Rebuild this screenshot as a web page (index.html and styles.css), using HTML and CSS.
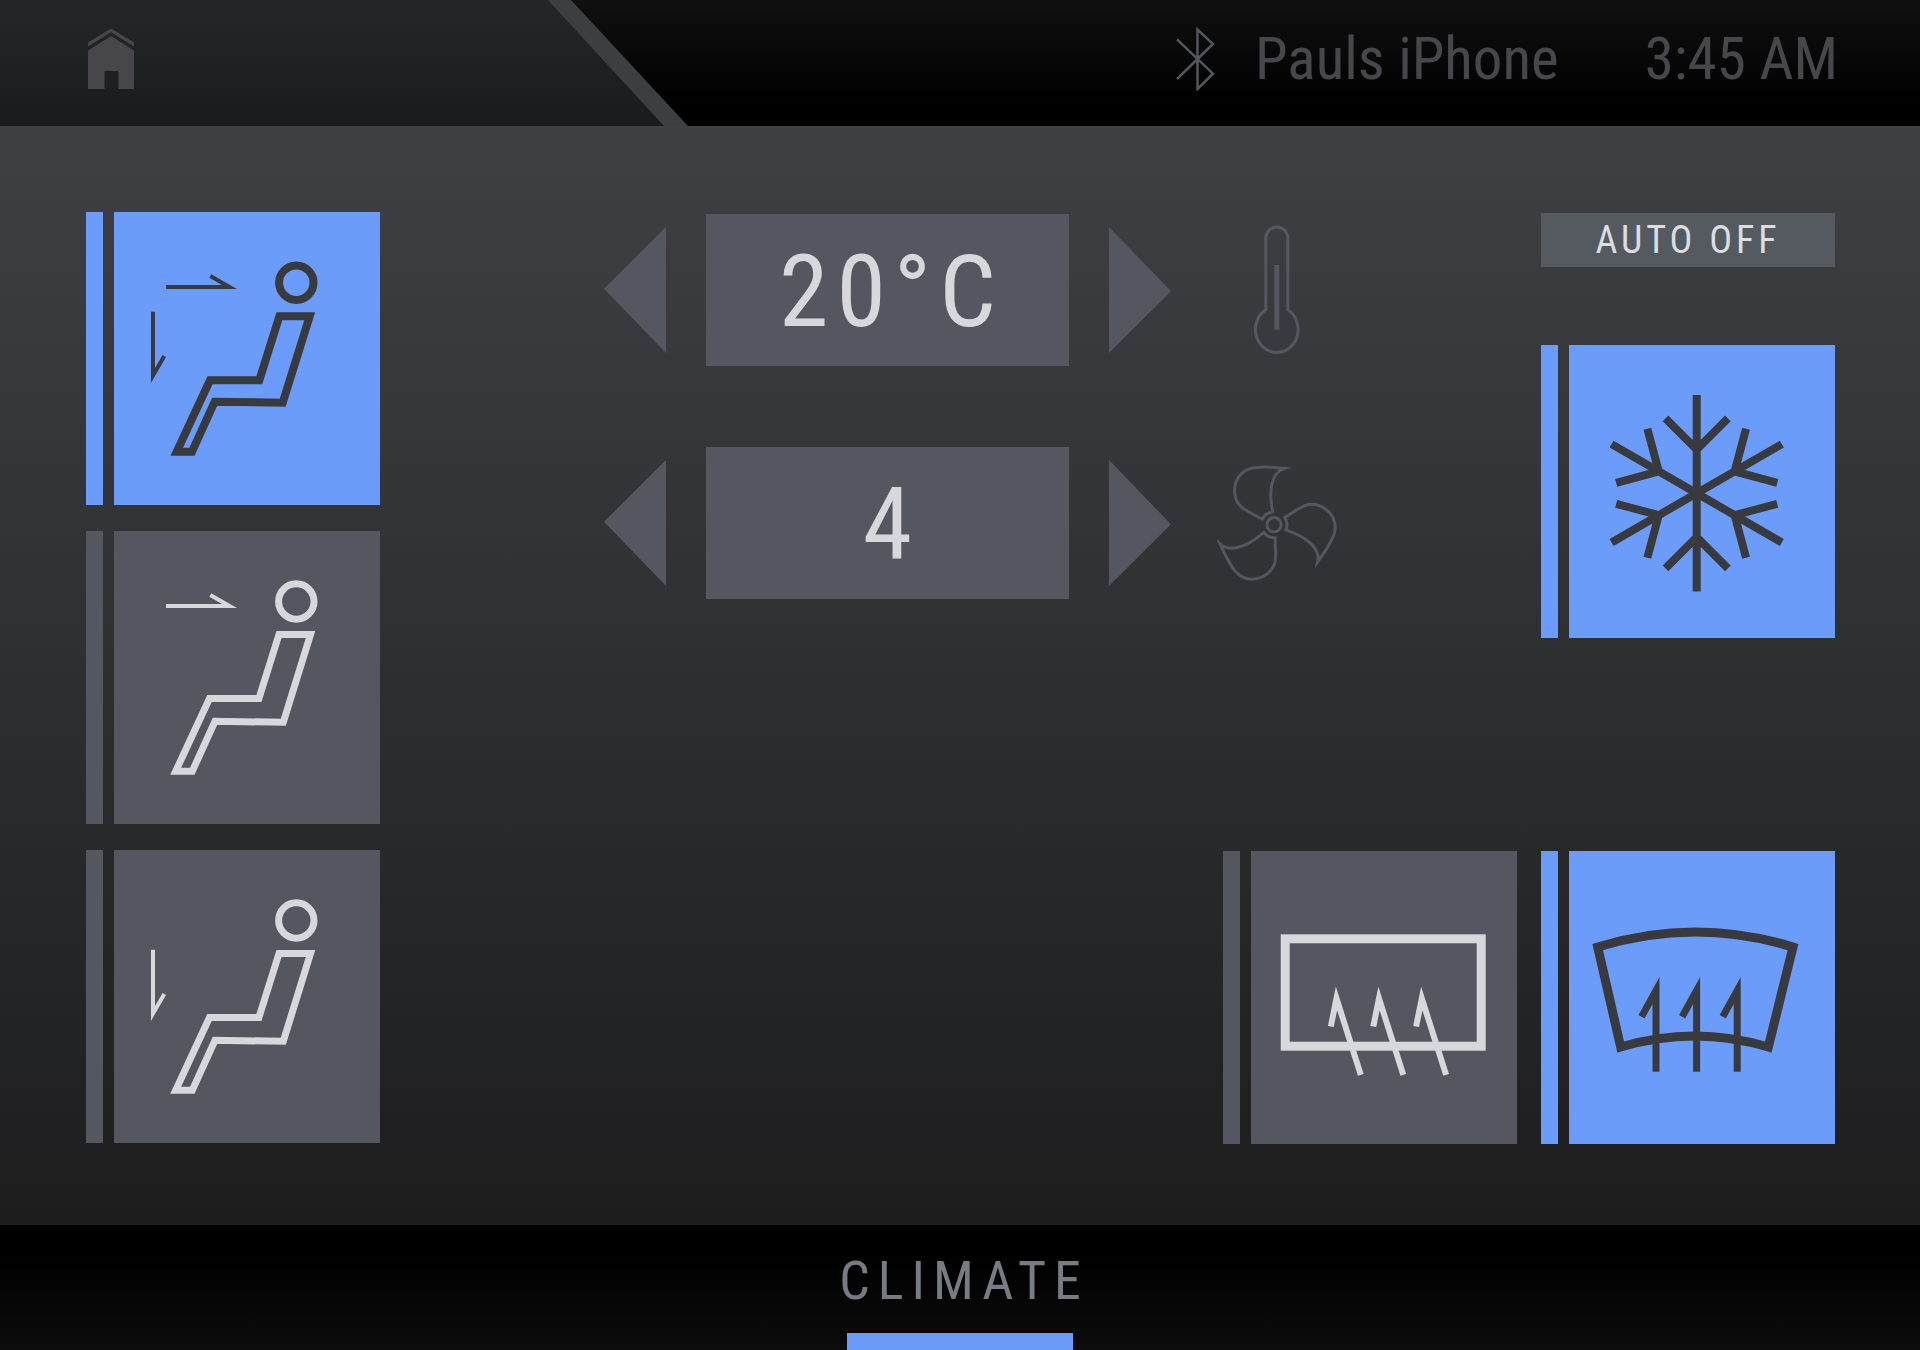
FILE: index.html
```html
<!DOCTYPE html>
<html lang="en">

<head>
    <meta charset="utf-8">
    <title>Climate</title>
    <link rel="stylesheet" href="styles.css">
</head>

<body>

    <!-- Shared drawings -->
    <svg class="sprite" width="0" height="0" aria-hidden="true">
        <symbol id="flow-face" viewBox="0 0 266 293">
            <path d="M52 75H115.5L96.3 64" />
        </symbol>
        <symbol id="flow-feet" viewBox="0 0 266 293">
            <path d="M39 99.7V163.5L50.3 144" />
        </symbol>
        <symbol id="seat" viewBox="0 0 266 293">
            <circle cx="182.3" cy="70.5" r="17.7" />
            <path d="M165 103.5H196.5L169.3 191.3L101 190.3L78.3 240.2H61.7L95.5 167.5H144.9Z" />
        </symbol>
        <symbol id="seat-bold" viewBox="0 0 266 293">
            <circle cx="182.3" cy="70.7" r="17.2" />
            <path d="M165.4 104.3H195.7L168.7 190.7L100.7 189.7L78 239.7H62.7L96 168.3H145.3Z" />
        </symbol>
        <symbol id="snow-arm" viewBox="0 0 266 293">
            <path d="M127.7 148.3V50M96.5 73.3L127.7 104.5L158.9 73.3" />
        </symbol>
    </svg>

    <header class="header">
        <div class="header-tab">
            <div class="header-tab-inner">
                <a class="home" href="#" aria-label="Home">
                    <svg width="46" height="62" viewBox="0 0 46 62">
                        <path d="M0 14.5L23 0.5L46 14.5V18.5L23 4.3L0 18.5Z" />
                        <path d="M0 22.5L23 8L46 22.5V61H30.5V43H16.5V61H0Z" />
                    </svg>
                </a>
            </div>
        </div>
        <div class="status">
            <svg class="bluetooth" width="40" height="64" viewBox="0 0 40 64">
                <path d="M2 12.3L38 46.7L22.5 62V2.5L38 17L2 52" />
            </svg>
            <span class="device">Pauls iPhone</span>
            <time class="clock">3:45 AM</time>
        </div>
    </header>

    <main class="main">

        <!-- Air direction -->
        <div class="airflow">
            <button class="tile active" aria-label="Face and feet" aria-pressed="true">
                <svg class="tile-icon" viewBox="0 0 266 293">
                    <g class="thin"><use href="#flow-face" /><use href="#flow-feet" /></g>
                    <g class="bold"><use href="#seat-bold" /></g>
                </svg>
            </button>
            <button class="tile" aria-label="Face" aria-pressed="false">
                <svg class="tile-icon" viewBox="0 0 266 293">
                    <g class="thin"><use href="#flow-face" /></g>
                    <g class="medium"><use href="#seat" /></g>
                </svg>
            </button>
            <button class="tile" aria-label="Feet" aria-pressed="false">
                <svg class="tile-icon" viewBox="0 0 266 293">
                    <g class="thin"><use href="#flow-feet" /></g>
                    <g class="medium"><use href="#seat" /></g>
                </svg>
            </button>
        </div>

        <!-- Temperature and fan speed -->
        <div class="steppers">
            <div class="stepper">
                <button class="arrow arrow-left" aria-label="Lower temperature"></button>
                <output class="value">20°C</output>
                <button class="arrow arrow-right" aria-label="Raise temperature"></button>
                <div class="stepper-icon">
                    <svg width="46" height="130" viewBox="0 0 46 130">
                        <path d="M11.8 84.7V13A11 11 0 0 1 33.8 13V84.7A21.3 23 0 1 1 11.8 84.7Z" />
                        <path class="mercury" d="M22.8 40V104.7" />
                    </svg>
                </div>
            </div>
            <div class="stepper">
                <button class="arrow arrow-left" aria-label="Lower fan speed"></button>
                <output class="value">4</output>
                <button class="arrow arrow-right" aria-label="Raise fan speed"></button>
                <div class="stepper-icon">
                    <svg width="122" height="118" viewBox="0 0 122 118">
                        <circle cx="58" cy="60.7" r="7.2" />
                        <path id="blade" d="M56.5 47.7C53 30 53.5 8 68.5 3.4C56 2 46 1.6 37 2.8C23 5.5 17 17 18 29C20 44 30 46 46 55A14 14 0 0 1 56.5 47.7Z" />
                        <use href="#blade" transform="rotate(120 58 60.7)" />
                        <use href="#blade" transform="rotate(240 58 60.7)" />
                    </svg>
                </div>
            </div>
        </div>

        <div class="cooling">
            <button class="auto">AUTO OFF</button>
            <button class="tile active" aria-label="Air conditioning" aria-pressed="true">
                <svg class="tile-icon bold" viewBox="0 0 266 293">
                    <use href="#snow-arm" />
                    <use href="#snow-arm" transform="rotate(60 127.7 148.3)" />
                    <use href="#snow-arm" transform="rotate(120 127.7 148.3)" />
                    <use href="#snow-arm" transform="rotate(180 127.7 148.3)" />
                    <use href="#snow-arm" transform="rotate(240 127.7 148.3)" />
                    <use href="#snow-arm" transform="rotate(300 127.7 148.3)" />
                </svg>
            </button>
        </div>

        <!-- Defrost -->
        <div class="defrost">
            <button class="tile" aria-label="Rear defrost" aria-pressed="false">
                <svg class="tile-icon" viewBox="0 0 266 293">
                    <rect class="frame" x="34.2" y="87.8" width="196" height="107.4" />
                    <path class="heat-rear" d="M79.8 175.5L85.5 147.5L109.8 223.8M122.3 175.5L128 147.5L152.3 223.8M165.1 175.5L170.8 147.5L195.1 223.8" />
                </svg>
            </button>
            <button class="tile active" aria-label="Windscreen defrost" aria-pressed="true">
                <svg class="tile-icon" viewBox="0 0 266 293">
                    <path class="frame" d="M28.7 96Q126.3 66 224 96L199.3 196Q125.5 174 51.7 196Z" />
                    <path class="heat-front" d="M72.5 165.7L87 139.5V220.7M113.1 165.7L127.6 139.5V220.7M153.7 165.7L168.2 139.5V220.7" />
                </svg>
            </button>
        </div>

    </main>

    <footer class="footer">
        <a class="footer-tab" href="#">CLIMATE</a>
    </footer>

</body>

</html>
```

FILE: styles.css
```css
* {
    box-sizing: border-box;
}

body {
    display: flex;
    flex-direction: column;
    min-height: 100vh;
    margin: 0;
    background-color: #000;
    font-family: "Roboto Condensed", "Liberation Sans Narrow", Roboto, sans-serif;
}

button {
    padding: 0;
    border: none;
    background: none;
    font: inherit;
    cursor: pointer;
}

a {
    text-decoration: none;
}

svg {
    display: block;
}

.sprite {
    position: absolute;
}

/* Header */
.header {
    display: flex;
    justify-content: space-between;
    height: 126px;
    background: linear-gradient(#101010, #000 85%);
}

.header-tab {
    width: 688px;
    padding-right: 24px;
    background-color: #3d3e42;
    clip-path: polygon(0 0, calc(100% - 117px) 0, 100% 100%, 0 100%);
}

.header-tab-inner {
    display: flex;
    align-items: center;
    height: 100%;
    padding-left: 88px;
    background: linear-gradient(#252628, #1a1b1c);
    clip-path: polygon(0 0, calc(100% - 116px) 0, 100% 100%, 0 100%);
}

.home {
    padding-bottom: 8px;
    fill: #47464a;
}

.status {
    display: flex;
    align-items: center;
    padding: 0 82px 8px 0;
    color: #47474b;
    font-size: 59px;
    line-height: 64px;
}

.bluetooth {
    margin-right: 40px;
    fill: none;
    stroke: #54565d;
    stroke-width: 2.5;
}

.device {
    margin-right: 86px;
}

/* Main area */
.main {
    display: grid;
    flex: 1;
    grid-template-columns: 294px 1fr 294px;
    grid-template-rows: auto 1fr;
    padding: 86px 85px 81px 86px;
    background: linear-gradient(#3e4044, #343538 32%, #28292b 65%, #1d1d1e);
}

.airflow {
    display: flex;
    flex-direction: column;
    grid-row: 1 / 3;
    gap: 26px;
}

/* Tile with a strip on its left side */
.tile {
    display: block;
    width: 294px;
    height: 293px;
    padding-left: 28px;
    background: linear-gradient(90deg, #54575f 17px, transparent 17px, transparent 28px, #54575f 28px);
    color: #d7d8dc;
}

.tile.active {
    background: linear-gradient(90deg, #6c9cfa 17px, transparent 17px, transparent 28px, #6c9cfa 28px);
    color: #393a3d;
}

.tile-icon {
    width: 266px;
    height: 293px;
    fill: none;
    stroke: currentColor;
    stroke-miterlimit: 10;
}

.thin {
    stroke-width: 4;
}

.medium {
    stroke-width: 7;
}

.bold {
    stroke-width: 8;
}

.frame {
    stroke-width: 9;
}

.heat-rear {
    stroke-width: 6;
}

.heat-front {
    stroke-width: 7;
}

/* Steppers */
.steppers {
    display: flex;
    flex-direction: column;
    align-items: center;
    gap: 81px;
    padding: 2px 0 0 20px;
}

.stepper {
    display: flex;
    align-items: center;
}

.arrow {
    width: 62px;
    height: 126px;
    background-color: #54575f;
}

.arrow-left {
    clip-path: polygon(100% 0, 100% 100%, 0 49%);
}

.arrow-right {
    clip-path: polygon(0 0, 100% 51%, 0 100%);
}

.value {
    width: 363px;
    margin: 0 40px;
    padding: 4px 0 0 8px;
    background-color: #54575f;
    color: #d7d8dc;
    font-size: 100px;
    line-height: 148px;
    letter-spacing: 8px;
    text-align: center;
}

.stepper-icon {
    display: flex;
    justify-content: center;
    width: 120px;
    margin-left: 46px;
    fill: none;
    stroke: #54575f;
    stroke-width: 3;
    stroke-miterlimit: 10;
}

.mercury {
    stroke-width: 5;
}

/* Right side */
.cooling {
    display: flex;
    flex-direction: column;
    gap: 78px;
    padding-top: 1px;
}

.auto {
    background-color: #555a61;
    color: #dcdde0;
    font-size: 38px;
    line-height: 54px;
    letter-spacing: 4px;
}

.defrost {
    display: flex;
    grid-column: 2 / 4;
    align-self: end;
    justify-content: flex-end;
    gap: 24px;
}

/* Footer */
.footer {
    display: flex;
    justify-content: center;
    height: 125px;
    background: linear-gradient(#000 20%, #0c0c0c);
}

.footer-tab {
    display: flex;
    justify-content: center;
    width: 226px;
    padding: 24px 0 0 8px;
    border-bottom: 17px solid #6c9cfa;
    color: #797b84;
    font-size: 54px;
    line-height: 64px;
    letter-spacing: 8px;
}
```
